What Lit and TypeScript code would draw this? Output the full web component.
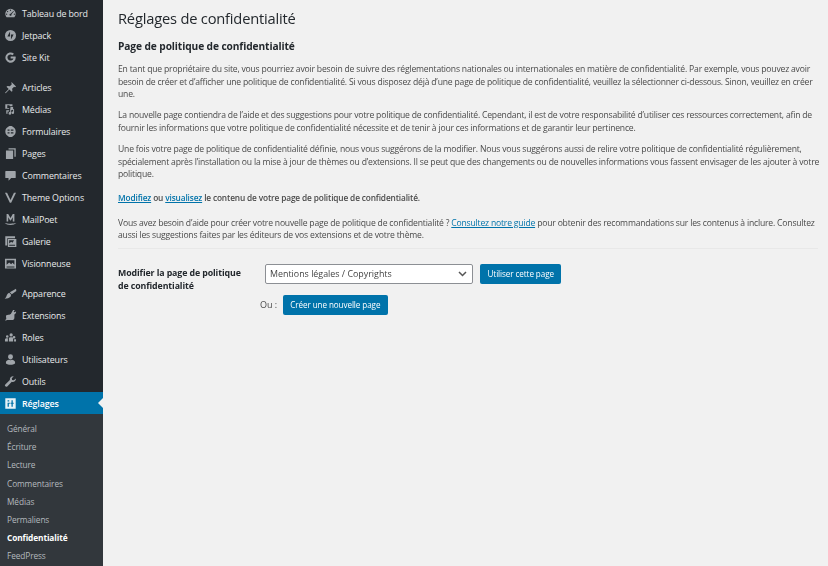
import { LitElement, html, css, svg } from "lit";
import { customElement } from "lit/decorators.js";

const I: Record<string, any> = {
  dash: svg`<path d="M10 2.500a8 8 0 0 0-8 8c0 2 .8 3.900 2 5.200h12a8 8 0 0 0 2-5.200 8 8 0 0 0-8-8zM10 4a1 1 0 1 1 0 2 1 1 0 0 1 0-2zM5.500 6a1 1 0 1 1 0 2 1 1 0 0 1 0-2zm9 0 .8.600-3.800 4.600a1.600 1.600 0 1 1-1.200-.9zM4 10a1 1 0 1 1 0 2 1 1 0 0 1 0-2zm12 0a1 1 0 1 1 0 2 1 1 0 0 1 0-2z" fill-rule="evenodd"/>`,
  jet: svg`<path d="M10 1.500a8.500 8.500 0 1 0 0 17 8.500 8.500 0 0 0 0-17zM9.300 4v7.600H5.200zM10.700 16V8.400h4.100z" fill-rule="evenodd"/>`,
  g: svg`<path d="M17.800 8.500H10.200v3h4.300a4.700 4.700 0 1 1-1.400-5l2.200-2.200A7.900 7.900 0 1 0 18 10c0-.5 0-1-.2-1.500z"/>`,
  pin: svg`<path d="M11.500 1.500 18.500 8.500l-1.500 1-1.500-.5-3 3 .5 3.500-1.200 1.200-3.500-3.500L3 18.500l-1.500.5.5-1.500 5.300-5.300-3.500-3.500L5.500 7.500 9 8l3-3-.5-1.500z"/>`,
  media: svg`<path d="M2 2h11v3H9.500L8 3.500H5v4h3v1.500H2zM10 6h4v3l1.500 1v5a2 2 0 1 1-1.500-2v-2.500l-3 .5V16a2 2 0 1 1-1.500-2V10.500zM3.500 11H8v2H5.500v3.500H3.500z"/>`,
  form: svg`<path d="M10 1.500c2.500 0 3.500 1 4.500 2s3.500 2 3.500 6.500-2.500 5.500-3.500 6.500-2 2-4.500 2-3.500-1-4.500-2S2 14.500 2 10s2.500-5.500 3.500-6.500 2-2 4.500-2zM5.500 7v2h3V7zm5 0v2h4V7zm-5 4v2h3v-2zm5 0v2h4v-2z" fill-rule="evenodd"/>`,
  pages: svg`<path d="M7 2h11v13h-2V4H7zM3 5.500h11V18.500H3z"/>`,
  comment: svg`<path d="M3 3h14a1 1 0 0 1 1 1v9a1 1 0 0 1-1 1h-6l-4 4v-4H3a1 1 0 0 1-1-1V4a1 1 0 0 1 1-1z"/>`,
  v: svg`<path d="M1.500 2.500h3.200L10 14l5.300-11.500h3.200L11 18H9z"/>`,
  mail: svg`<path d="M4 1.500h2.500L10 7.500l3.500-6H16V13h-2.500V6.500L10.500 11.500h-1L6.500 6.500V13H4zM1 15.500c3 1 5.500 1 9 1s6-.5 9-1c-2 2-5 3-9 3s-7-1-9-3z"/>`,
  gal: svg`<path d="M2 2h15v3H5v11H2zM6 6h13v12.500H6zm2 2v5l3-2.500 2 1.500 2.500-4zm0 7v1.500h9V15z" fill-rule="evenodd"/>`,
  vis: svg`<path d="M1.500 2.500h17v15h-17zM4 5v7l4-3.500 3 2.500 2-2 3 3V5zm0 9.500V16h12v-1.500z" fill-rule="evenodd"/>`,
  brush: svg`<path d="M18.500 2.500 19 6 12 11l-3-3zM8 9l3 3-1 3c-2 2-5 3-9 3 2-1 2.500-3 3-4.500S6 10 8 9z"/>`,
  plug: svg`<path d="M14 1.500h2.500L14.800 4.500l2.200.5 1.500-1.500v2.500L16 8.500V13a4 4 0 0 1-4 4H4l-1 1.500L2 17l1.500-1.500-.5-5c1-1 3-1.500 5-1.500l2.500-1.500z"/>`,
  roles: svg`<path d="M5 6.500a2 2 0 1 1 0 4 2 2 0 0 1 0-4zm6-3a2.500 2.500 0 1 1 0 5 2.500 2.500 0 0 1 0-5zm4.500 4a2 2 0 1 1 0 4 2 2 0 0 1 0-4zM1.500 16v-3c0-1.500 1.500-2 3.500-2l1 .2V16zm6 0V11c0-1 1.500-1.500 3.500-1.500s3 .5 3 1.500v5zm8 0v-3.500h3V16z"/>`,
  user: svg`<path d="M10 2a3.800 3.800 0 0 1 3.800 3.800c0 2-1.500 4.200-3.800 4.200S6.200 7.800 6.200 5.800A3.800 3.800 0 0 1 10 2zm-7 14v-2c0-2 3-3 4.500-3.500 1.500 1 3.500 1 5 0 1.500.5 4.500 1.500 4.500 3.500v2c-2 1.500-4 2-7 2s-5-.5-7-2z"/>`,
  tool: svg`<path d="M18.500 5.500a5 5 0 0 1-6.500 5l-7 7a2 2 0 0 1-3-3l7-7a5 5 0 0 1 6-5.500l-3 3 .5 2.500 2.500.5z"/>`,
  set: svg`<path d="M2 2h16v16H2zm3.500 3v2H8V5zm6 0v4H10v1.500h1.500V15h2v-4.500H15V9h-1.500V5zM5.500 9v6h2v-4.500H9V9z" fill-rule="evenodd"/>`,
};

const groups: [string, string][][] = [
  [["dash", "Tableau de bord"], ["jet", "Jetpack"], ["g", "Site Kit"]],
  [["pin", "Articles"], ["media", "Médias"], ["form", "Formulaires"], ["pages", "Pages"], ["comment", "Commentaires"], ["v", "Theme Options"], ["mail", "MailPoet"], ["gal", "Galerie"], ["vis", "Visionneuse"]],
  [["brush", "Apparence"], ["plug", "Extensions"], ["roles", "Roles"], ["user", "Utilisateurs"], ["tool", "Outils"]],
];
const sub = ["Général", "Écriture", "Lecture", "Commentaires", "Médias", "Permaliens", "Confidentialité", "FeedPress"];

@customElement("app-root")
export class AppRoot extends LitElement {
  static styles = css`
    :host { display: block; width: 828px; height: 566px; overflow: hidden; background: #f1f1f1; font-family: "Open Sans", "Noto Sans", sans-serif; color: #4a4a4a; }
    .page { display: flex; height: 566px; filter: blur(0.4px); }
    .side { width: 103px; flex: none; background: #23282d; display: flex; flex-direction: column; padding-top: 2px; box-sizing: border-box; overflow: hidden; }
    .group { display: flex; flex-direction: column; margin-bottom: 8px; }
    .item { height: 22px; display: flex; align-items: center; gap: 5px; padding-left: 4px; font-size: 8.900px; letter-spacing: -0.12px; color: #e8eaeb; font-weight: 500; }
    .item svg { width: 13px; height: 13px; fill: #a0a5aa; flex: none; }
    .cur { position: relative; background: #0073aa; color: #fff; margin-top: -8px; font-weight: 600; }
    .cur svg { fill: #e6f2f7; }
    .cur::after { content: ""; position: absolute; right: 0; top: 6px; border: 5px solid transparent; border-right-color: #f1f1f1; border-left: 0; }
    .subs { background: #32373c; flex: 1; display: flex; flex-direction: column; padding-top: 5.400px; }
    .subs div { height: 18.200px; flex: none; display: flex; align-items: center; padding-left: 7px; font-size: 8.300px; letter-spacing: -0.1px; color: #b4b9be; }
    .subs .on { color: #fff; font-weight: 700; }
    .main { flex: 1; min-width: 0; padding: 7px 8px 0 15px; font-size: 8.600px; letter-spacing: -0.19px; line-height: 12.600px; }
    h1 { margin: 0; font-size: 14.700px; letter-spacing: -0.2px; line-height: 22px; font-weight: 400; color: #23282d; }
    h2 { margin: 9px 0 0; font-size: 10.200px; letter-spacing: -0.1px; line-height: 16px; font-weight: 700; color: #23282d; }
    p { margin: 9px 0 0; }
    p + p { margin-top: 8.500px; }
    .gap { margin-top: 12px; }
    p.strong { margin-top: 11.500px; letter-spacing: -0.14px; font-size: 8.300px; }
    a { color: #0073aa; text-decoration: underline; }
    .strong { font-weight: 600; }
    hr { border: 0; border-top: 1px solid #e8e8e8; margin: 6px 2px 0 0; }
    .form { display: grid; grid-template-columns: 147px auto; margin-top: 15px; }
    .lab { font-weight: 700; font-size: 8.800px; letter-spacing: -0.1px; line-height: 13px; color: #23282d; padding-top: 3px; width: 125px; }
    .ctl { display: flex; flex-direction: column; gap: 11px; }
    .row { display: flex; align-items: center; gap: 7px; }
    .sel { width: 208px; height: 20px; box-sizing: border-box; background: #fff; border: 1px solid #8c8f94; border-radius: 2px; display: flex; align-items: center; justify-content: space-between; padding: 0 5px 0 4px; font-size: 8.900px; letter-spacing: 0; color: #444; }
    .sel svg { width: 9px; height: 6px; fill: none; stroke: #555; stroke-width: 1.500; }
    .btn { height: 20px; display: flex; align-items: center; padding: 0 7.500px; background: #0073aa; color: #fff; border-radius: 2px; font-size: 8.100px; letter-spacing: -0.08px; font-weight: 500; }
    .ou { margin-left: -5px; font-size: 9px; letter-spacing: 0; margin-right: -1.500px; }
  `;
  render() {
    const icon = (n: string) => html`<svg viewBox="0 0 20 20">${I[n]}</svg>`;
    return html`<div class="page">
      <nav class="side">
        ${groups.map((g) => html`<div class="group">${g.map(([i, t]) => html`<div class="item">${icon(i)}<span>${t}</span></div>`)}</div>`)}
        <div class="item cur">${icon("set")}<span>Réglages</span></div>
        <div class="subs">${sub.map((s) => html`<div class=${s === "Confidentialité" ? "on" : ""}>${s}</div>`)}</div>
      </nav>
      <main class="main">
        <h1>Réglages de confidentialité</h1>
        <h2>Page de politique de confidentialité</h2>
        <p>En tant que propriétaire du site, vous pourriez avoir besoin de suivre des réglementations nationales ou internationales en matière de confidentialité. Par exemple, vous pouvez avoir besoin de créer et d’afficher une politique de confidentialité. Si vous disposez déjà d’une page de politique de confidentialité, veuillez la sélectionner ci-dessous. Sinon, veuillez en créer une.</p>
        <p>La nouvelle page contiendra de l’aide et des suggestions pour votre politique de confidentialité. Cependant, il est de votre responsabilité d’utiliser ces ressources correctement, afin de fournir les informations que votre politique de confidentialité nécessite et de tenir à jour ces informations et de garantir leur pertinence.</p>
        <p>Une fois votre page de politique de confidentialité définie, nous vous suggérons de la modifier. Nous vous suggérons aussi de relire votre politique de confidentialité régulièrement, spécialement après l’installation ou la mise à jour de thèmes ou d’extensions. Il se peut que des changements ou de nouvelles informations vous fassent envisager de les ajouter à votre politique.</p>
        <p class="strong"><a href="#">Modifiez</a> ou <a href="#">visualisez</a> le contenu de votre page de politique de confidentialité.</p>
        <p class="gap">Vous avez besoin d’aide pour créer votre nouvelle page de politique de confidentialité ? <a href="#">Consultez notre guide</a> pour obtenir des recommandations sur les contenus à inclure. Consultez aussi les suggestions faites par les éditeurs de vos extensions et de votre thème.</p>
        <hr />
        <div class="form">
          <div class="lab">Modifier la page de politique de confidentialité</div>
          <div class="ctl">
            <div class="row">
              <div class="sel"><span>Mentions légales / Copyrights</span><svg viewBox="0 0 9 6"><path d="M1 1l3.500 3.500L8 1" /></svg></div>
              <div class="btn">Utiliser cette page</div>
            </div>
            <div class="row"><span class="ou">Ou :</span><div class="btn">Créer une nouvelle page</div></div>
          </div>
        </div>
      </main>
    </div>`;
  }
}
